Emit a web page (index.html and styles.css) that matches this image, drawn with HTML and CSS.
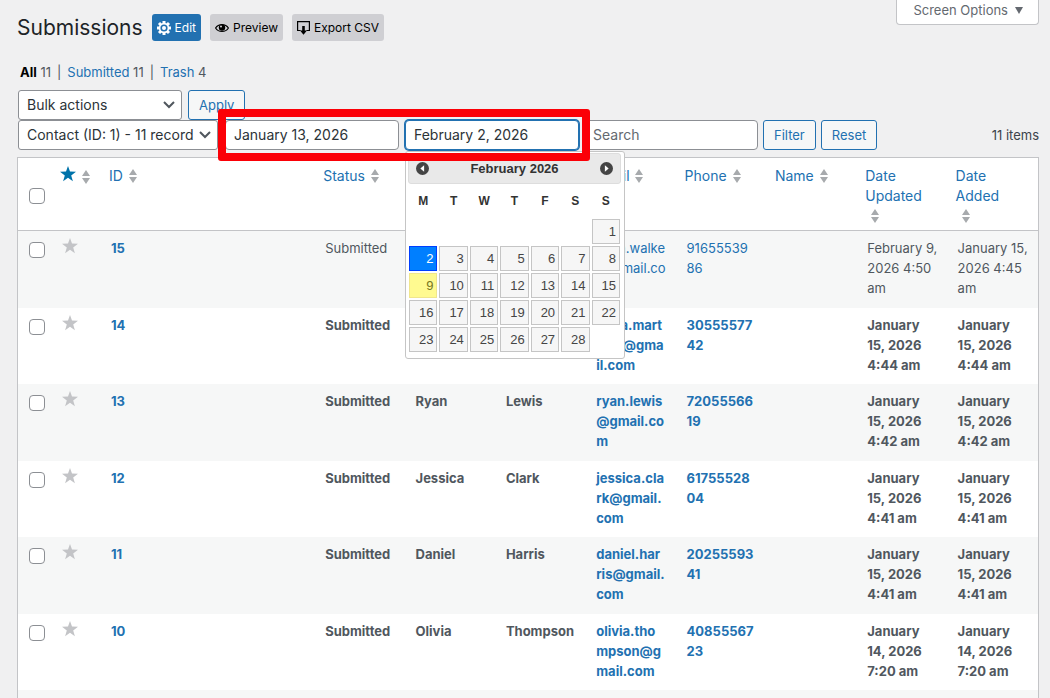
FILE: index.html
```html
<!DOCTYPE html>
<html lang="en">

<head>
    <meta charset="UTF-8">
    <meta name="viewport" content="width=device-width, initial-scale=1.0">
    <title>Submissions</title>
    <link rel="stylesheet" href="styles.css">
</head>

<body>
    <!-- shared icons -->
    <svg class="sprite" aria-hidden="true">
        <symbol id="star" viewBox="0 0 16 16">
            <path d="M8 0l2 5.6 6 .2-4.800 3.600L12.900 15.200 8 11.800 3.100 15.200 4.800 9.400 0 5.800l6-.2z" />
        </symbol>
        <symbol id="sort" viewBox="0 0 8 14">
            <path d="M4 0l4 6H0zM0 8h8l-4 6z" />
        </symbol>
    </svg>

    <div class="wrap">
        <header class="top">
            <h1>Submissions</h1>
            <button type="button" class="action primary">
                <svg width="14" height="14" viewBox="0 0 14 14">
                    <g stroke="#fff" stroke-width="3">
                        <path d="M7 0v14M0 7h14M2 2l10 10M12 2L2 12" />
                    </g>
                    <circle cx="7" cy="7" r="5.200" fill="#fff" />
                    <circle cx="7" cy="7" r="3.600" fill="#2271b1" />
                    <circle cx="7" cy="7" r="2" fill="#fff" />
                </svg>
                Edit
            </button>
            <button type="button" class="action">
                <svg width="14" height="10" viewBox="0 0 14 10">
                    <path d="M.6 5C3.500.4 10.500.4 13.400 5 10.500 9.600 3.500 9.600.6 5z" fill="none" stroke="#000" stroke-width="1.200" />
                    <circle cx="7" cy="4.600" r="3.200" />
                    <circle cx="6" cy="3.600" r="1" fill="#dcdcde" />
                </svg>
                Preview
            </button>
            <button type="button" class="action">
                <svg width="13" height="14" viewBox="0 0 13 14">
                    <path d="M3.500 9.500H.6V.6h11.800v8.900H9.500" fill="none" stroke="#000" stroke-width="1.200" />
                    <path d="M5.200 5h2.600v4.500h2.200L6.500 13.800 3 9.500h2.200z" />
                </svg>
                Export CSV
            </button>
            <button type="button" class="screen-options">Screen Options <span class="caret"></span></button>
        </header>

        <ul class="views">
            <li><a href="#" class="current">All</a> 11</li>
            <li><a href="#">Submitted</a> 11</li>
            <li><a href="#">Trash</a> 4</li>
        </ul>

        <div class="tools">
            <span class="select bulk">
                <select aria-label="Bulk actions">
                    <option>Bulk actions</option>
                </select>
                <svg width="12" height="8" viewBox="0 0 12 8"><path d="M1 1l5 5 5-5" /></svg>
            </span>
            <button type="button" class="button">Apply</button>
        </div>

        <div class="tools filters">
            <span class="select form-filter">
                <select aria-label="Form">
                    <option>Contact (ID: 1) - 11 record</option>
                </select>
                <svg width="12" height="8" viewBox="0 0 12 8"><path d="M1 1l5 5 5-5" /></svg>
            </span>
            <div class="date-range">
                <input type="text" class="text" aria-label="Start date" value="January 13, 2026">
                <div class="date-field">
                    <input type="text" class="text focused" aria-label="End date" value="February 2, 2026">
                    <div class="datepicker">
                        <div class="dp-header">
                            <button type="button" aria-label="Previous month">
                                <svg width="13" height="13" viewBox="0 0 12 12"><circle cx="6" cy="6" r="6" fill="#444" /><path d="M7.500 3v6L4 6z" fill="#fff" /></svg>
                            </button>
                            <span>February 2026</span>
                            <button type="button" aria-label="Next month">
                                <svg width="13" height="13" viewBox="0 0 12 12"><circle cx="6" cy="6" r="6" fill="#444" /><path d="M4.500 3v6L8 6z" fill="#fff" /></svg>
                            </button>
                        </div>
                        <table>
                            <thead>
                                <tr><th>M</th><th>T</th><th>W</th><th>T</th><th>F</th><th>S</th><th>S</th></tr>
                            </thead>
                            <tbody>
                                <tr>
                                    <td></td><td></td><td></td><td></td><td></td><td></td>
                                    <td><a href="#">1</a></td>
                                </tr>
                                <tr>
                                    <td><a href="#" class="active">2</a></td>
                                    <td><a href="#">3</a></td>
                                    <td><a href="#">4</a></td>
                                    <td><a href="#">5</a></td>
                                    <td><a href="#">6</a></td>
                                    <td><a href="#">7</a></td>
                                    <td><a href="#">8</a></td>
                                </tr>
                                <tr>
                                    <td><a href="#" class="today">9</a></td>
                                    <td><a href="#">10</a></td>
                                    <td><a href="#">11</a></td>
                                    <td><a href="#">12</a></td>
                                    <td><a href="#">13</a></td>
                                    <td><a href="#">14</a></td>
                                    <td><a href="#">15</a></td>
                                </tr>
                                <tr>
                                    <td><a href="#">16</a></td>
                                    <td><a href="#">17</a></td>
                                    <td><a href="#">18</a></td>
                                    <td><a href="#">19</a></td>
                                    <td><a href="#">20</a></td>
                                    <td><a href="#">21</a></td>
                                    <td><a href="#">22</a></td>
                                </tr>
                                <tr>
                                    <td><a href="#">23</a></td>
                                    <td><a href="#">24</a></td>
                                    <td><a href="#">25</a></td>
                                    <td><a href="#">26</a></td>
                                    <td><a href="#">27</a></td>
                                    <td><a href="#">28</a></td>
                                    <td></td>
                                </tr>
                            </tbody>
                        </table>
                    </div>
                </div>
            </div>
            <input type="text" class="text" aria-label="Search" placeholder="Search">
            <button type="button" class="button">Filter</button>
            <button type="button" class="button">Reset</button>
            <span class="count">11 items</span>
        </div>

        <table class="list">
            <thead>
                <tr>
                    <th class="check"><input type="checkbox" aria-label="Select all"></th>
                    <th class="starred"><a href="#" aria-label="Starred"><svg class="star on"><use href="#star" /></svg> <svg class="sort"><use href="#sort" /></svg></a></th>
                    <th class="id"><a href="#">ID <svg class="sort"><use href="#sort" /></svg></a></th>
                    <th><a href="#">Status <svg class="sort"><use href="#sort" /></svg></a></th>
                    <th></th>
                    <th></th>
                    <th><a href="#">Email <svg class="sort"><use href="#sort" /></svg></a></th>
                    <th><a href="#">Phone <svg class="sort"><use href="#sort" /></svg></a></th>
                    <th><a href="#">Name <svg class="sort"><use href="#sort" /></svg></a></th>
                    <th><a href="#">Date<br>Updated<br><svg class="sort"><use href="#sort" /></svg></a></th>
                    <th><a href="#">Date<br>Added<br><svg class="sort"><use href="#sort" /></svg></a></th>
                </tr>
            </thead>
            <tbody>
                <tr class="read">
                    <td class="check"><input type="checkbox" aria-label="Select 15"></td>
                    <td><svg class="star"><use href="#star" /></svg></td>
                    <td><a href="#" class="row-id">15</a></td>
                    <td>Submitted</td>
                    <td></td>
                    <td></td>
                    <td><a href="#">evan.walke<br>r@gmail.co<br>m</a></td>
                    <td><a href="#">91655539<br>86</a></td>
                    <td></td>
                    <td>February 9,<br>2026 4:50<br>am</td>
                    <td>January 15,<br>2026 4:45<br>am</td>
                </tr>
                <tr>
                    <td class="check"><input type="checkbox" aria-label="Select 14"></td>
                    <td><svg class="star"><use href="#star" /></svg></td>
                    <td><a href="#" class="row-id">14</a></td>
                    <td>Submitted</td>
                    <td></td>
                    <td></td>
                    <td><a href="#">laura.mart<br>inez@gma<br>il.com</a></td>
                    <td><a href="#">30555577<br>42</a></td>
                    <td></td>
                    <td>January<br>15, 2026<br>4:44 am</td>
                    <td>January<br>15, 2026<br>4:44 am</td>
                </tr>
                <tr>
                    <td class="check"><input type="checkbox" aria-label="Select 13"></td>
                    <td><svg class="star"><use href="#star" /></svg></td>
                    <td><a href="#" class="row-id">13</a></td>
                    <td>Submitted</td>
                    <td>Ryan</td>
                    <td>Lewis</td>
                    <td><a href="#">ryan.lewis<br>@gmail.co<br>m</a></td>
                    <td><a href="#">72055566<br>19</a></td>
                    <td></td>
                    <td>January<br>15, 2026<br>4:42 am</td>
                    <td>January<br>15, 2026<br>4:42 am</td>
                </tr>
                <tr>
                    <td class="check"><input type="checkbox" aria-label="Select 12"></td>
                    <td><svg class="star"><use href="#star" /></svg></td>
                    <td><a href="#" class="row-id">12</a></td>
                    <td>Submitted</td>
                    <td>Jessica</td>
                    <td>Clark</td>
                    <td><a href="#">jessica.cla<br>rk@gmail.<br>com</a></td>
                    <td><a href="#">61755528<br>04</a></td>
                    <td></td>
                    <td>January<br>15, 2026<br>4:41 am</td>
                    <td>January<br>15, 2026<br>4:41 am</td>
                </tr>
                <tr>
                    <td class="check"><input type="checkbox" aria-label="Select 11"></td>
                    <td><svg class="star"><use href="#star" /></svg></td>
                    <td><a href="#" class="row-id">11</a></td>
                    <td>Submitted</td>
                    <td>Daniel</td>
                    <td>Harris</td>
                    <td><a href="#">daniel.har<br>ris@gmail.<br>com</a></td>
                    <td><a href="#">20255593<br>41</a></td>
                    <td></td>
                    <td>January<br>15, 2026<br>4:41 am</td>
                    <td>January<br>15, 2026<br>4:41 am</td>
                </tr>
                <tr>
                    <td class="check"><input type="checkbox" aria-label="Select 10"></td>
                    <td><svg class="star"><use href="#star" /></svg></td>
                    <td><a href="#" class="row-id">10</a></td>
                    <td>Submitted</td>
                    <td>Olivia</td>
                    <td>Thompson</td>
                    <td><a href="#">olivia.tho<br>mpson@g<br>mail.com</a></td>
                    <td><a href="#">40855567<br>23</a></td>
                    <td></td>
                    <td>January<br>14, 2026<br>7:20 am</td>
                    <td>January<br>14, 2026<br>7:20 am</td>
                </tr>
                <tr>
                    <td colspan="11"></td>
                </tr>
            </tbody>
        </table>
    </div>
</body>

</html>
```

FILE: styles.css
```css
* {
    box-sizing: border-box;
}

body {
    margin: 0;
    height: 100vh;
    overflow: hidden;
    background: #f0f0f1;
    color: #3c434a;
    font-family: Inter, "Liberation Sans", sans-serif;
    font-size: 13px;
    line-height: 20px;
}

button,
input,
select {
    font-family: inherit;
    margin: 0;
}

a {
    color: #2271b1;
    text-decoration: none;
}

.sprite {
    position: absolute;
    width: 0;
    height: 0;
}

.wrap {
    height: 100%;
    overflow: hidden;
    padding: 0 11px 0 17px;
}

/* title row */
.top {
    display: flex;
    align-items: center;
    gap: 9px;
    height: 55px;
}

h1 {
    margin: 0;
    color: #1d2327;
    font-size: 21px;
    font-weight: 400;
    line-height: 30px;
}

.action {
    display: flex;
    align-items: center;
    gap: 4px;
    height: 27px;
    padding: 0 5px;
    border: 0;
    border-radius: 3px;
    background: #cfcfd3;
    color: #000;
    font-size: 12px;
}

.action.primary {
    background: #2271b1;
    color: #fff;
}

.screen-options {
    display: flex;
    align-items: center;
    align-self: flex-start;
    gap: 7px;
    height: 25px;
    margin-left: auto;
    padding: 0 15px 4px 16px;
    border: 1px solid #c3c4c7;
    border-top: 0;
    border-radius: 0 0 4px 4px;
    background: #fff;
    color: #646970;
    font-size: 13px;
}

.caret {
    border: 4px solid transparent;
    border-top: 7px solid #646970;
    border-bottom: 0;
}

/* status links */
.views {
    display: flex;
    margin: 7px 0 8px;
    padding: 0 0 0 3px;
    list-style: none;
    color: #50575e;
}

.views li + li::before {
    content: "|";
    margin: 0 6px;
}

.views .current {
    color: #000;
    font-weight: 700;
}

/* bulk actions and filters */
.tools {
    display: flex;
    align-items: center;
    gap: 5px;
    padding-left: 1px;
}

.select {
    position: relative;
    display: block;
}

.select select {
    appearance: none;
    width: 100%;
    height: 30px;
    padding: 0 20px 1px 8px;
    border: 1px solid #8c8f94;
    border-radius: 3px;
    background: #fff;
    color: #2c3338;
    font-size: 14px;
}

.select svg {
    position: absolute;
    top: 11px;
    right: 7px;
    fill: none;
    stroke: #50575e;
    stroke-width: 2;
}

.bulk {
    width: 164px;
    margin-right: 1px;
}

.form-filter {
    width: 200px;
    margin-right: 2px;
}

.text {
    display: block;
    width: 174px;
    height: 30px;
    padding: 0 8px 1px;
    border: 1px solid #8c8f94;
    border-radius: 4px;
    background: #fff;
    color: #2c3338;
    font-size: 14px;
}

.text::placeholder {
    color: #646970;
}

.text.focused {
    border-color: #2271b1;
    box-shadow: 0 0 0 1px #2271b1;
}

.button {
    height: 30px;
    padding: 0 10px;
    border: 1px solid #2271b1;
    border-radius: 3px;
    background: #f6f7f7;
    color: #2271b1;
    font-size: 13px;
}

.count {
    margin-left: auto;
}

.date-range {
    position: relative;
    display: flex;
    gap: 6px;
}

/* red highlight round both date fields */
.date-range::after {
    content: "";
    position: absolute;
    inset: -11px -11px -11px -7px;
    border: 8px solid #fb0007;
    border-radius: 3px;
    z-index: 3;
    pointer-events: none;
}

.date-field {
    position: relative;
}

/* calendar */
.datepicker {
    position: absolute;
    top: 31px;
    left: 0;
    z-index: 2;
    width: 220px;
    padding: 1px 3px 5px 2px;
    border: 1px solid #c5c5c5;
    border-radius: 3px;
    background: #fff;
    color: #333;
    font-family: "Liberation Sans", Arial, sans-serif;
}

.dp-header {
    display: flex;
    align-items: center;
    justify-content: space-between;
    height: 31px;
    padding: 0 7px;
    border: 1px solid #ddd;
    border-radius: 3px;
    background: #e9e9e9;
    font-size: 13px;
    font-weight: 700;
}

.dp-header button {
    display: flex;
    padding: 0;
    border: 0;
    background: none;
}

.datepicker table {
    width: 100%;
    table-layout: fixed;
    border-collapse: collapse;
}

.datepicker th {
    height: 34px;
    padding: 0;
    font-size: 12px;
}

.datepicker td {
    height: 27px;
    padding: 1px;
}

.datepicker td a {
    display: block;
    height: 25px;
    padding: 0 3px;
    border: 1px solid #c5c5c5;
    background: #f6f6f6;
    color: #454545;
    font-size: 13px;
    line-height: 23px;
    text-align: right;
}

.datepicker td .active {
    border-color: #003eff;
    background: #007fff;
    color: #fff;
}

.datepicker td .today {
    border-color: #f0e68c;
    background: #fffa90;
    color: #777620;
}

/* submissions list */
.list {
    width: 100%;
    margin-top: 7px;
    table-layout: fixed;
    border: 1px solid #c3c4c7;
    border-spacing: 0;
    background: #fff;
    color: #50575e;
}

.list th {
    height: 73px;
    padding: 8px 7px 0 8px;
    border-bottom: 1px solid #c3c4c7;
    font-size: 14px;
    font-weight: 400;
    text-align: left;
    vertical-align: top;
}

.list td {
    height: 76px;
    padding: 7px 0 8px 10px;
    font-weight: 700;
    vertical-align: top;
    white-space: nowrap;
}

.list tbody tr:nth-child(odd) {
    background: #f6f7f7;
}

.list tbody tr:nth-child(odd) td {
    height: 77px;
}

.list .read td {
    font-weight: 400;
}

.list .read .row-id {
    font-weight: 700;
}

.list .check {
    width: 34px;
    padding-top: 11px;
    padding-left: 11px;
}

.list th.check {
    padding-top: 30px;
}

.starred {
    width: 49px;
}

.id {
    width: 21%;
}

.list input {
    appearance: none;
    display: block;
    width: 16px;
    height: 16px;
    border: 1px solid #8c8f94;
    border-radius: 4px;
    background: #fff;
}

.star {
    width: 16px;
    height: 16px;
    fill: #c3c4c7;
}

.star.on {
    fill: #0073aa;
}

.sort {
    width: 8px;
    height: 14px;
    margin-left: 2px;
    fill: #a7aaad;
    vertical-align: -2px;
}

br + .sort {
    margin-left: 6px;
}
```
